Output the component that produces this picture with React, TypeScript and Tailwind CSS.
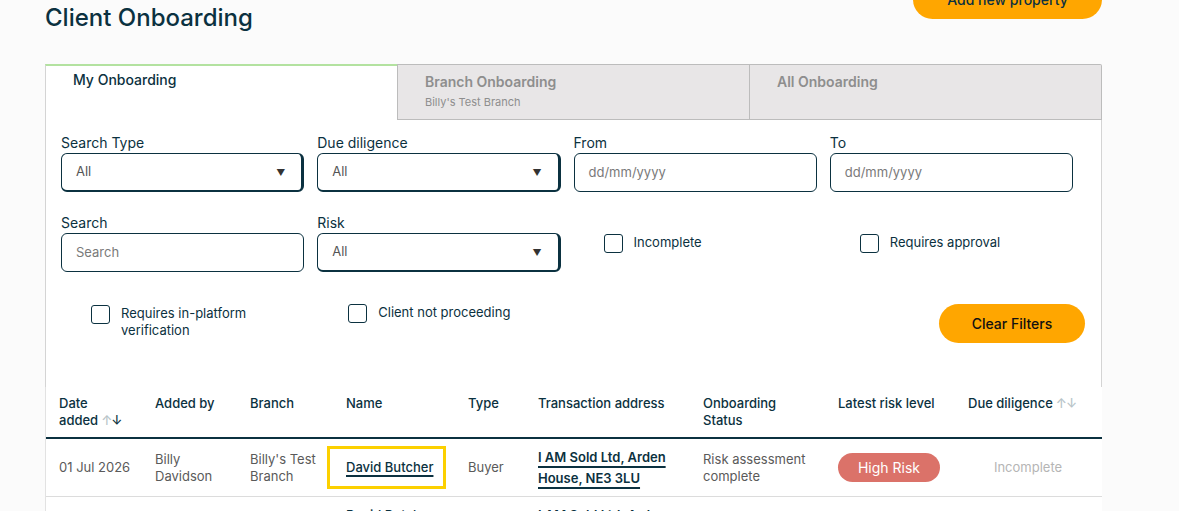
import React from "react";

const ink = "text-[#0b3140]";

function Caret() {
  return <span className="text-[9px] text-[#333] leading-none">▼</span>;
}

function SelectBox({ value }: { value: string }) {
  return (
    <div className="h-[39px] rounded-[6px] border border-r-[3px] border-b-2 border-[#0b3140] bg-white flex items-center justify-between pl-[14px] pr-[16px]">
      <span className="text-[13px] text-[#555]">{value}</span>
      <Caret />
    </div>
  );
}

function TextBox({ placeholder }: { placeholder: string }) {
  return (
    <div className="h-[39px] rounded-[6px] border border-[#0b3140] bg-white flex items-center pl-[14px]">
      <span className="text-[13px] text-[#7a7a7a]">{placeholder}</span>
    </div>
  );
}

function Field({ label, children }: { label: string; children: React.ReactNode }) {
  return (
    <div className="flex flex-col">
      <div className={`text-[14px] leading-[20px] ${ink}`}>{label}</div>
      {children}
    </div>
  );
}

function Check({ label, className = "" }: { label: string; className?: string }) {
  return (
    <div className={`flex items-start gap-[11px] pl-[30px] ${className}`}>
      <span className="mt-[1px] w-[19px] h-[19px] shrink-0 rounded-[3px] border-[1.5px] border-[#0b3140] bg-white" />
      <span className={`text-[13px] leading-[17px] ${ink} max-w-[150px] pt-[1px]`}>{label}</span>
    </div>
  );
}

const cols = "grid grid-cols-[96px_95px_96px_122px_70px_165px_135px_130px_1fr] pl-[13px]";

function Arrows({ downDark }: { downDark?: boolean }) {
  return (
    <span className="ml-[3px] tracking-[-1px]">
      <span className="text-[#b8c4c8]">↑</span>
      <span className={downDark ? "text-[#0b3140]" : "text-[#b8c4c8]"}>↓</span>
    </span>
  );
}

function NameLink({ boxed }: { boxed?: boolean }) {
  const link = (
    <span className={`font-medium ${ink} underline decoration-2 underline-offset-[3px]`}>David Butcher</span>
  );
  if (!boxed) return link;
  return (
    <span className="inline-block -ml-[19px] border-[3px] border-[#fcd000] pl-[16px] pr-[10px] py-[10px]">{link}</span>
  );
}

function Row({ first }: { first?: boolean }) {
  return (
    <div
      className={`${cols} border-b border-[#dcdcdc] text-[13px] leading-[17px] text-[#5a5a5a] items-center ${
        first ? "h-[58px]" : "h-[96px]"
      }`}
    >
      <div>01 Jul 2026</div>
      <div>
        Billy
        <br />
        Davidson
      </div>
      <div>
        Billy's Test
        <br />
        Branch
      </div>
      <div className={first ? "" : "self-start pt-[10px]"}>
        <NameLink boxed={first} />
      </div>
      <div>Buyer</div>
      <div className={`font-semibold ${ink} leading-[21px] pr-[8px] ${first ? "" : "self-start pt-[8px]"}`}>
        <span className="underline decoration-2 underline-offset-[4px]">I AM Sold Ltd, Arden House, NE3 3LU</span>
      </div>
      <div>
        Risk assessment
        <br />
        complete
      </div>
      <div>
        <span className="inline-flex items-center justify-center w-[102px] h-[29px] rounded-full bg-[#db7269] text-white text-[14px]">
          High Risk
        </span>
      </div>
      <div className="text-center pr-[14px] text-[#b5b5b5]">Incomplete</div>
    </div>
  );
}

export default function App() {
  return (
    <div
      className="min-h-screen bg-[#fbfbfb] overflow-hidden"
      style={{ fontFamily: "Inter, 'Noto Sans', Arial, sans-serif" }}
    >
      <div className="w-[1057px] ml-[45px]">
        {/* page header */}
        <div className="flex justify-between items-start h-[64px]">
          <h1 className={`text-[24px] leading-[32px] mt-[2px] font-medium ${ink}`}>Client Onboarding</h1>
          <button className={`-mt-[20px] w-[189px] h-[39px] rounded-full bg-[#ffa600] text-[14px] font-medium ${ink}`}>
            Add new property
          </button>
        </div>

        {/* tabs */}
        <div className="flex h-[56px]">
          <div className="w-[352px] bg-white border-l border-[#d4d4d4] border-t-2 border-t-[#b3e2a0] pl-[27px] pt-[4px]">
            <div className={`text-[14px] leading-[20px] font-medium ${ink}`}>My Onboarding</div>
          </div>
          <div className="w-[353px] bg-[#e8e6e7] border border-[#bcbcbc] pl-[27px] pt-[7px]">
            <div className="text-[14px] leading-[20px] font-semibold text-[#8e8e8e]">Branch Onboarding</div>
            <div className="text-[11px] leading-[16px] mt-[2px] text-[#8e8e8e]">Billy's Test Branch</div>
          </div>
          <div className="flex-1 bg-[#e8e6e7] border border-l-0 border-[#bcbcbc] rounded-tr-[2px] pl-[27px] pt-[7px]">
            <div className="text-[14px] leading-[20px] font-semibold text-[#8e8e8e]">All Onboarding</div>
          </div>
        </div>

        {/* filters */}
        <div className="bg-white border-l border-r border-[#d4d4d4] pl-[15px] pr-[28px] pt-[13px] pb-[44px]">
          <div className="grid grid-cols-4 gap-x-[13px] gap-y-[21px]">
            <Field label="Search Type">
              <SelectBox value="All" />
            </Field>
            <Field label="Due diligence">
              <SelectBox value="All" />
            </Field>
            <Field label="From">
              <TextBox placeholder="dd/mm/yyyy" />
            </Field>
            <Field label="To">
              <TextBox placeholder="dd/mm/yyyy" />
            </Field>
            <Field label="Search">
              <TextBox placeholder="Search" />
            </Field>
            <Field label="Risk">
              <SelectBox value="All" />
            </Field>
            <div className="pt-[20px]">
              <Check label="Incomplete" />
            </div>
            <div className="pt-[20px]">
              <Check label="Requires approval" />
            </div>
          </div>
          <div className="grid grid-cols-4 gap-x-[13px] mt-[32px]">
            <Check label="Requires in-platform verification" />
            <Check label="Client not proceeding" className="-mt-[1px] pl-[31px]" />
            <div />
            <div className="flex justify-end -mr-[12px]">
              <button className="w-[146px] h-[39px] rounded-full bg-[#ffa600] text-[14px] font-medium text-[#111]">
                Clear Filters
              </button>
            </div>
          </div>
        </div>

        {/* results table */}
        <div className="bg-white border-l border-[#e2e2e2]">
          <div
            className={`${cols} h-[52px] pt-[8px] border-b-2 border-[#0b3140] text-[13px] leading-[17px] font-medium ${ink}`}
          >
            <div>
              Date
              <br />
              added
              <Arrows downDark />
            </div>
            <div>Added by</div>
            <div>Branch</div>
            <div>Name</div>
            <div>Type</div>
            <div>Transaction address</div>
            <div>
              Onboarding
              <br />
              Status
            </div>
            <div>Latest risk level</div>
            <div>
              Due diligence
              <Arrows />
            </div>
          </div>
          <Row first />
          <Row />
        </div>
      </div>
    </div>
  );
}
